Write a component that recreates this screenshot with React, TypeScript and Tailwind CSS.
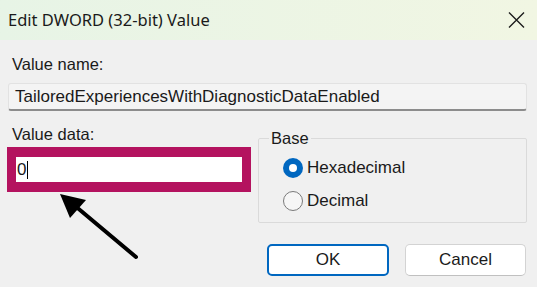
import React from "react";

const dialogFont = { fontFamily: '"Liberation Sans", Arial, sans-serif' };

function Radio({ checked, label }: { checked?: boolean; label: string }) {
  return (
    <div className="flex items-center h-[20px]">
      {checked ? (
        <span className="w-[20px] h-[20px] rounded-full bg-[#0067c0] flex items-center justify-center">
          <span className="w-[8px] h-[8px] rounded-full bg-white" />
        </span>
      ) : (
        <span className="w-[20px] h-[20px] rounded-full border-[1.5px] border-[#7a7a7a] bg-[#f6f6f6]" />
      )}
      <span className="ml-[4px] text-[17px] leading-[18px] text-[#1a1a1a]">{label}</span>
    </div>
  );
}

export default function App() {
  return (
    <div className="w-[537px] h-[287px] bg-[#f0f0f0] relative overflow-hidden" style={dialogFont}>
      {/* title bar */}
      <div className="h-[40px] flex items-center justify-between bg-gradient-to-r from-[#e7f4e6] to-[#f1f6e3]">
        <span
          className="pl-[8px] text-[16.5px] text-[#1a1a1a] leading-none"
          style={{ fontFamily: '"Noto Sans", "Open Sans", sans-serif' }}
        >
          Edit DWORD (32-bit) Value
        </span>
        <svg width="17" height="16" viewBox="0 0 17 16" className="mr-[12px]">
          <path d="M1 0.5 L16 15.5 M16 0.5 L1 15.5" stroke="#1c1c1c" strokeWidth="1.4" />
        </svg>
      </div>

      <div className="pt-[15px]">
        <div className="pl-[12px] text-[16.5px] leading-[18px] text-[#1a1a1a]">Value name:</div>
        <div className="mt-[10px] ml-[8px] w-[519px] h-[28px] bg-[#f4f4f4] border border-[#e2e2e2] border-b-[2px] border-b-[#8c8c8c] rounded-[3px] flex items-center pl-[6px] text-[17px] text-[#1a1a1a]">
          TailoredExperiencesWithDiagnosticDataEnabled
        </div>

        <div className="flex mt-[14px]">
          <div className="ml-[7px] w-[244px]">
            <div className="pl-[5px] text-[16.5px] leading-[18px] text-[#1a1a1a]">Value data:</div>
            <div className="mt-[4px] h-[45px] border-[9px] border-t-[10px] border-b-[10px] border-[#b4135f] bg-white flex items-center">
              <span className="pl-[1px] text-[17px] text-[#1a1a1a] leading-none">0</span>
              <span className="ml-[1px] w-[1px] h-[18px] bg-black" />
            </div>
          </div>

          <fieldset className="ml-[7px] mt-[4px] w-[269px] h-[94px] border border-[#dadada] rounded-[2px]">
            <legend className="ml-[10px] px-[2px] text-[16.5px] leading-[18px] text-[#1a1a1a]">Base</legend>
            <div className="mt-[11px] pl-[24px] flex flex-col gap-[13px]">
              <Radio checked label="Hexadecimal" />
              <Radio label="Decimal" />
            </div>
          </fieldset>
        </div>

        <div className="flex justify-end gap-[16px] mt-[21px] pr-[11px]">
          <button className="w-[122px] h-[32px] bg-white border-2 border-[#0067c0] rounded-[5px] text-[17px] text-[#1a1a1a]">
            OK
          </button>
          <button className="w-[121px] h-[32px] bg-white border border-[#d3d3d3] border-b-[#c0c0c0] rounded-[5px] text-[17px] text-[#1a1a1a]">
            Cancel
          </button>
        </div>
      </div>

      {/* annotation arrow */}
      <svg className="absolute left-0 top-0 pointer-events-none" width="537" height="287">
        <line x1="136" y1="257" x2="74" y2="205" stroke="#000" strokeWidth="4" strokeLinecap="round" />
        <polygon points="60,194 86,200 70,218" fill="#000" />
      </svg>
    </div>
  );
}
